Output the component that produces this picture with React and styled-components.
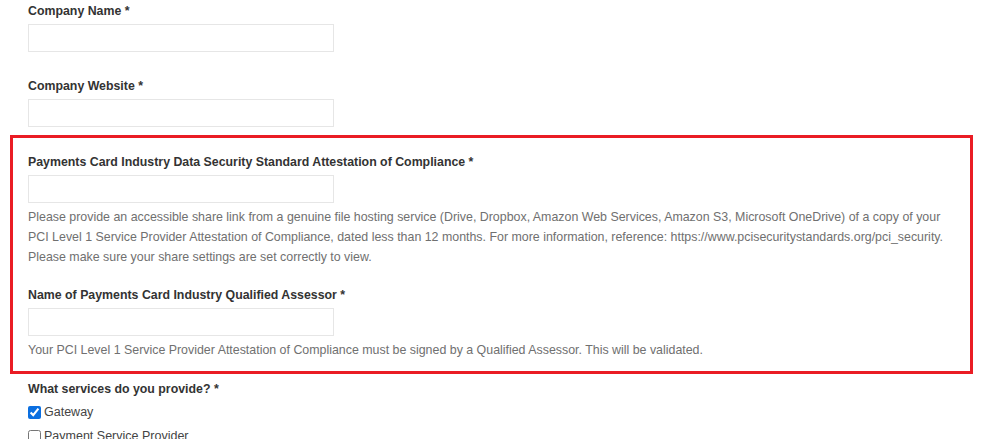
import styled, { createGlobalStyle } from "styled-components";

const GlobalStyle = createGlobalStyle`
    html, body {
        margin: 0;
        padding: 0;
        background: #ffffff;
    }
    body {
        font-family: "Liberation Sans", Arial, sans-serif;
        color: #333333;
    }
`;

const fields = [
    { id: "company-name", label: "Company Name *" },
    { id: "company-website", label: "Company Website *" },
];

const services = [
    { id: "gateway", label: "Gateway", checked: true },
    { id: "psp", label: "Payment Service Provider", checked: false },
];

const App = () => {
    return (
        <>
            <GlobalStyle />
            <Page>
                <Plain>
                    {fields.map((f) => (
                        <Group key={f.id}>
                            <Label htmlFor={f.id}>{f.label}</Label>
                            <Input id={f.id} type="text" />
                        </Group>
                    ))}
                </Plain>

                <Highlight>
                    <Group $tight>
                        <Label htmlFor="pci-aoc">
                            Payments Card Industry Data Security Standard Attestation of Compliance *
                        </Label>
                        <Input id="pci-aoc" type="text" />
                        <Help>
                            Please provide an accessible share link from a genuine file hosting service
                            (Drive, Dropbox, Amazon Web Services, Amazon S3, Microsoft OneDrive) of a copy
                            of your PCI Level 1 Service Provider Attestation of Compliance, dated less than
                            12 months. For more information, reference:
                            https://www.pcisecuritystandards.org/pci_security. Please make sure your share
                            settings are set correctly to view.
                        </Help>
                    </Group>
                    <Group $tight>
                        <Label htmlFor="pci-qsa">Name of Payments Card Industry Qualified Assessor *</Label>
                        <Input id="pci-qsa" type="text" />
                        <Help>
                            Your PCI Level 1 Service Provider Attestation of Compliance must be signed by a
                            Qualified Assessor. This will be validated.
                        </Help>
                    </Group>
                </Highlight>

                <Plain>
                    <Label as="div" $gap={2}>What services do you provide? *</Label>
                    <Checks>
                        {services.map((s) => (
                            <CheckRow key={s.id}>
                                <Box type="checkbox" defaultChecked={s.checked} />
                                <span>{s.label}</span>
                            </CheckRow>
                        ))}
                    </Checks>
                </Plain>
            </Page>
        </>
    );
};

export default App;

const Page = styled.div`
    width: 963px;
    padding: 2px 27px 0 10px;
    display: flex;
    flex-direction: column;
`;

const Plain = styled.div`
    padding: 0 18px;
    display: flex;
    flex-direction: column;
`;

const Group = styled.div`
    display: flex;
    flex-direction: column;
    margin-bottom: ${(p) => (p.$tight ? "19px" : "25px")};

    &:last-child {
        margin-bottom: ${(p) => (p.$tight ? "0" : "8px")};
    }
`;

const Label = styled.label`
    display: block;
    font-size: 12.35px;
    font-weight: 700;
    line-height: 18px;
    color: #333333;
    margin-bottom: ${(p) => (p.$gap ?? 4)}px;
`;

const Input = styled.input`
    box-sizing: border-box;
    width: 306px;
    height: 28px;
    border: 1px solid #e6e6e6;
    border-radius: 0;
    background: #ffffff;
    padding: 4px 8px;
    margin: 0;
    outline: none;
`;

const Help = styled.p`
    margin: 4px 0 0;
    font-size: 12.4px;
    line-height: 20px;
    color: #707070;
    max-width: 927px;
`;

const Highlight = styled.div`
    border: 3px solid #ea1c24;
    padding: 15px 15px 11px;
    display: flex;
    flex-direction: column;
    margin-bottom: 6px;
`;

const Checks = styled.div`
    display: flex;
    flex-direction: column;
`;

const CheckRow = styled.label`
    display: flex;
    align-items: center;
    gap: 3px;
    height: 24px;
    font-size: 12.5px;
    color: #444444;
`;

const Box = styled.input`
    width: 13px;
    height: 13px;
    margin: 0;
    accent-color: #0b6fe0;
`;
